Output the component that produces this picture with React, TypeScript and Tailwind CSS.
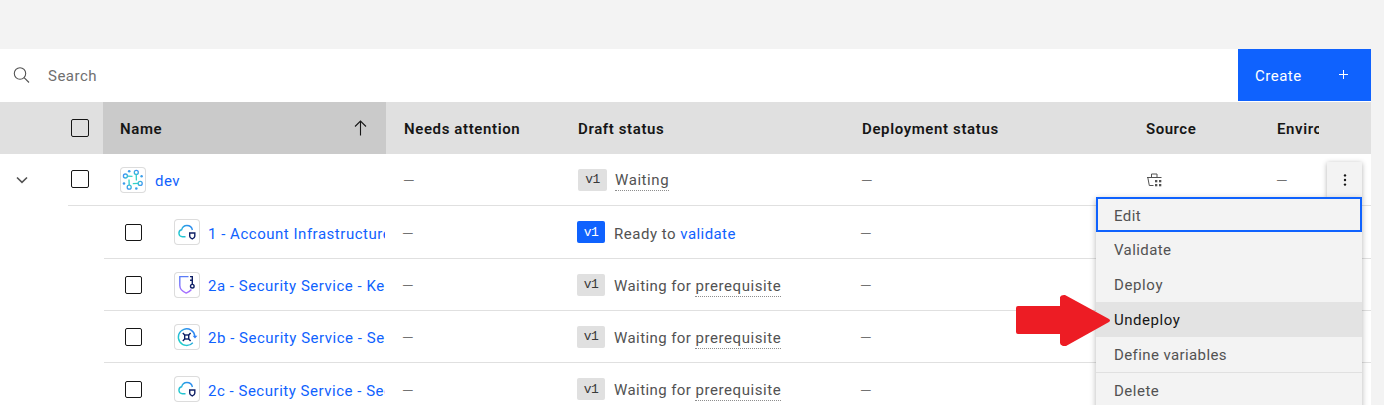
import type { ReactNode } from "react";

type IconKind = "arch" | "cloud" | "shield" | "rotate";

function Gradients() {
  return (
    <svg width="0" height="0" className="absolute" aria-hidden="true">
      <defs>
        <linearGradient id="aqua" gradientUnits="userSpaceOnUse" x1="4" y1="22" x2="22" y2="4">
          <stop offset="0.1" stopColor="#20d5c8" />
          <stop offset="0.9" stopColor="#2f7df6" />
        </linearGradient>
        <radialGradient id="aquaCore" gradientUnits="userSpaceOnUse" cx="13" cy="13" r="11">
          <stop offset="0.35" stopColor="#2fd6c4" />
          <stop offset="1" stopColor="#3f8ff5" />
        </radialGradient>
        <linearGradient id="violet" gradientUnits="userSpaceOnUse" x1="13" y1="4" x2="13" y2="22">
          <stop offset="0.1" stopColor="#5b7cf7" />
          <stop offset="0.9" stopColor="#a56eff" />
        </linearGradient>
      </defs>
    </svg>
  );
}

function Glyph({ kind }: { kind: IconKind }) {
  if (kind === "arch") {
    return (
      <g fill="none" stroke="url(#aquaCore)" strokeWidth="1.3">
        <circle cx="5.4" cy="9" r="2" />
        <circle cx="16.3" cy="5.4" r="2" />
        <circle cx="9.2" cy="20.2" r="2" />
        <circle cx="20.2" cy="16.4" r="2" />
        <path d="M7.5 9.1L12.5 9.3" />
        <path d="M16.2 7.5L16.4 13.5" />
        <path d="M9.2 18.1L9 12.5" />
        <path d="M18 16.4L12.8 16.6" />
        <g fill="url(#aquaCore)" stroke="none">
          <circle cx="9.2" cy="4.2" r="1.3" />
          <circle cx="21.6" cy="9.2" r="1.2" />
          <circle cx="4" cy="16.5" r="1.3" />
          <circle cx="16.3" cy="21.5" r="1.3" />
        </g>
      </g>
    );
  }
  if (kind === "cloud") {
    return (
      <g fill="none" strokeWidth="1.4">
        <path stroke="url(#aqua)" d="M11.5 17.8H8.4A3.6 3.6 0 0 1 7.7 10.7C8.3 8.2 10.4 6.5 12.9 6.5C15.8 6.5 17.9 8.5 18.4 11" />
        <path stroke="#0f1f66" d="M15.7 14H20.8V17.2C20.8 18.3 19.8 19.200 18.25 20C16.7 19.200 15.7 18.3 15.7 17.2Z" />
      </g>
    );
  }
  if (kind === "shield") {
    return (
      <g fill="none" strokeWidth="1.4">
        <path stroke="url(#violet)" d="M14.5 4.6H5.8V13.5C5.8 17.5 8.8 19.6 12.2 21.1C14.3 20.2 16.2 19.1 17.4 17.5" />
        <path stroke="#0f1f66" d="M18.3 12.3V4.6H16M18.3 8.2H16" />
        <circle stroke="#0f1f66" cx="18.3" cy="14.2" r="1.8" />
      </g>
    );
  }
  return (
    <g fill="none" strokeWidth="1.4">
      <path stroke="url(#aqua)" d="M20.9 12.300A8.300 8.300 0 1 0 18.800 18.700" />
      <path fill="#2f7df6" stroke="none" d="M18.600 11.800H23.400L21 14.600Z" />
      <rect stroke="#0f1f66" x="10.7" y="11" width="4" height="4" />
      <path stroke="#0f1f66" d="M8.800 9.100L10.7 11M16.6 9.1L14.7 11M8.800 16.900L10.7 15M16.6 16.9L14.7 15" />
    </g>
  );
}

function AppIcon({ kind }: { kind: IconKind }) {
  return (
    <span className="h-[26px] w-[26px] shrink-0 rounded-[4px] bg-white ring-1 ring-inset ring-[#dcdcdc]">
      <svg width="26" height="26" viewBox="0 0 26 26">
        <Glyph kind={kind} />
      </svg>
    </span>
  );
}

function Checkbox({ className = "h-[18px] w-[18px]" }: { className?: string }) {
  return <span className={"block shrink-0 rounded-[2px] border border-[#161616] " + className} />;
}

function Tag({ className = "w-[28px] bg-[#e0e0e0] text-[#393939]" }: { className?: string }) {
  return (
    <span
      className={
        "flex h-[22px] shrink-0 items-center justify-center rounded-[2px] pt-px font-['Liberation_Mono',monospace] text-[13px] tracking-[-0.5px] " +
        className
      }
    >
      v1
    </span>
  );
}

function Hint({ children }: { children: ReactNode }) {
  return (
    <span className="inline-block h-[21px] border-b border-dotted border-[#8d8d8d] leading-[20px] tracking-[0.58px]">
      {children}
    </span>
  );
}

function Dash() {
  return <span className="-ml-px inline-block pt-[3px] font-light">—</span>;
}

type ChildRow = { name: string; icon: IconKind; ready?: boolean; height: string; box: string };

// Titles run up to the edge of the name column.
const rows: ChildRow[] = [
  { name: "1 - Account Infrastructure", icon: "cloud", ready: true, height: "h-[53px]", box: "h-[17px] w-[17px]" },
  { name: "2a - Security Service - Ke", icon: "shield", height: "h-[52px]", box: "h-[18px] w-[17px] mt-px" },
  { name: "2b - Security Service - Se", icon: "rotate", height: "h-[52px]", box: "h-[18px] w-[17px] mt-px" },
  { name: "2c - Security Service - Sec", icon: "cloud", height: "h-[53px]", box: "h-[17px] w-[17px]" },
];

function Row({ row }: { row: ChildRow }) {
  return (
    <div className={"flex pl-[104px] " + row.height}>
      <div className="flex grow items-center border-b border-[#e0e0e0]">
        <div className="flex w-[281px] shrink-0 items-center overflow-hidden pl-[21px]">
          <Checkbox className={row.box} />
          <div className="ml-8 flex items-center">
            <AppIcon kind={row.icon} />
            <span className="ml-[8px] mt-[3px] whitespace-nowrap tracking-[0.52px] text-[#0f62fe]">{row.name}</span>
          </div>
        </div>
        <div className="w-[192px] shrink-0 pl-[18px]">
          <Dash />
        </div>
        <div className="flex w-[284px] shrink-0 items-center">
          <Tag className={row.ready ? "w-[28px] bg-[#0f62fe] text-white" : undefined} />
          <span className="ml-[9px] flex whitespace-pre pt-[3px] tracking-[0.42px]">
            {row.ready ? (
              <>
                <span className="tracking-[0.52px]">Ready to </span>
                <span className="text-[#0f62fe]">validate</span>
              </>
            ) : (
              <>
                Waiting for <Hint>prerequisite</Hint>
              </>
            )}
          </span>
        </div>
        <Dash />
      </div>
    </div>
  );
}

function MenuItem({ children, className = "" }: { children: ReactNode; className?: string }) {
  return <div className={"flex items-center pl-[18px] " + className}>{children}</div>;
}

function ActionMenu() {
  return (
    <div className="absolute left-[1096px] top-[197px] h-[240px] w-[266px] bg-[#f3f3f3] text-[#525252] shadow-[0_2px_6px_rgba(0,0,0,0.3)]">
      <MenuItem className="h-[35px] pt-[2px] tracking-[0.46px] ring-2 ring-inset ring-[#0f62fe]">Edit</MenuItem>
      <MenuItem className="h-[35px] tracking-[0.4px]">Validate</MenuItem>
      <MenuItem className="h-[35px] tracking-[0.62px]">Deploy</MenuItem>
      <MenuItem className="h-[35px] bg-[#e3e3e3] tracking-[0.53px] text-[#161616]">Undeploy</MenuItem>
      <MenuItem className="h-[35px] tracking-[0.4px]">Define variables</MenuItem>
      <MenuItem className="h-[36px] border-t border-[#e0e0e0]">Delete</MenuItem>
    </div>
  );
}

export default function App() {
  return (
    <div className="relative h-[405px] w-[1384px] overflow-hidden bg-[#f3f3f3] pt-[49px] font-['Roboto',sans-serif] text-[15px] leading-[20px] tracking-[0.5px] text-[#525252]">
      <Gradients />
      <div className="w-[1371px] bg-white">
        <div className="flex h-[53px] items-start">
          <div className="flex h-[52px] grow items-center pl-[13px]">
            <svg width="17" height="17" viewBox="0 0 17 17" fill="none" stroke="#525252" strokeWidth="1.1">
              <circle cx="7" cy="6.500" r="5.700" />
              <path d="M11.1 10.6L16 15.5" />
            </svg>
            <span className="ml-[18px] mt-[2px] text-[#6f6f6f]">Search</span>
          </div>
          <div className="flex h-[52px] w-[133px] items-center justify-between bg-[#0f62fe] pl-[17px] pr-[22px] text-white">
            <span className="mt-[2px] tracking-[0.5px]">Create</span>
            <svg width="11" height="11" viewBox="0 0 11 11" stroke="#fff" strokeWidth="1" className="-mt-px">
              <path d="M5.5 1V10M1 5.5H10" />
            </svg>
          </div>
        </div>

        <div className="flex h-[52px] items-stretch bg-[#e0e0e0] font-semibold tracking-[0.62px] text-[#161616]">
          <div className="flex w-[103px] items-center pl-[71px]">
            <Checkbox />
          </div>
          <div className="flex w-[283px] items-center justify-between bg-[#cacaca] pl-[17px] pr-[19px]">
            <span className="mt-[2px]">Name</span>
            <svg width="13" height="16" viewBox="0 0 13 16" fill="none" stroke="#161616" strokeWidth="1.1" className="-mt-px">
              <path d="M6.5 15.5V1M1 6.5L6.5 1L12 6.5" />
            </svg>
          </div>
          <div className="mt-[2px] flex w-[192px] items-center pl-[18px]">Needs attention</div>
          <div className="mt-[2px] flex w-[284px] items-center">Draft status</div>
          <div className="mt-[2px] flex w-[284px] items-center">Deployment status</div>
          <div className="mt-[2px] flex w-[131px] items-center tracking-[0.52px]">Source</div>
          <div className="mt-[2px] flex w-[42px] items-center overflow-hidden">Enviro</div>
        </div>

        <div className="flex h-[52px]">
          <div className="flex w-[68px] items-center pl-[16px]">
            <svg width="12" height="8" viewBox="0 0 12 8" fill="none" stroke="#525252" strokeWidth="1.6">
              <path d="M1 1.5L6 6.3L11 1.5" />
            </svg>
          </div>
          <div className="flex grow items-center border-b border-[#e0e0e0] pl-[3px]">
            <Checkbox className="mb-[2px] h-[18px] w-[18px]" />
            <div className="ml-[31px] flex w-[266px] items-center">
              <AppIcon kind="arch" />
              <span className="ml-[9px] mt-[3px] text-[#0f62fe]">dev</span>
            </div>
            <div className="w-[192px] pl-[18px]">
              <Dash />
            </div>
            <div className="flex w-[284px] items-center">
              <Tag className="w-[29px] bg-[#e0e0e0] text-[#393939]" />
              <span className="ml-[8px] mt-[2px]">
                <Hint>Waiting</Hint>
              </span>
            </div>
            <div className="w-[284px]">
              <Dash />
            </div>
            <div className="w-[131px]">
              <svg width="16" height="15" viewBox="0 0 16 15" fill="none" stroke="#525252" strokeWidth="1">
                <path d="M1 5.5H15.5M5.500 5.500V2H11V5.500M1.800 5.500L3.300 13.5H7.500" />
                <g fill="#525252" stroke="none">
                  <rect x="9" y="8" width="2.300" height="2.300" />
                  <rect x="13" y="8" width="2.300" height="2.300" />
                  <rect x="9" y="12" width="2.300" height="2.300" />
                  <rect x="13" y="12" width="2.300" height="2.300" />
                </g>
              </svg>
            </div>
            <Dash />
          </div>
        </div>

        {rows.map((row) => (
          <Row key={row.name} row={row} />
        ))}
      </div>

      <div className="absolute left-[1327px] top-[162px] flex h-[36px] w-[35px] items-center justify-center bg-[#f3f3f3] shadow-[0_1px_5px_rgba(0,0,0,0.3)]">
        <svg width="4" height="14" viewBox="0 0 4 14" fill="#161616">
          <circle cx="2" cy="2.4" r="1.2" />
          <circle cx="2" cy="7" r="1.2" />
          <circle cx="2" cy="11.6" r="1.2" />
        </svg>
      </div>
      <ActionMenu />
      <svg className="absolute left-[1016px] top-[295px]" width="95" height="52" viewBox="0 0 95 52">
        <path
          fill="#ed1c24"
          d="M2 11H44V2Q45 0 48 0H49L93 24Q95 25.5 93 27L50 51H47Q44 50 44 48V39H2Q0 39 0 37V13Q0 11 2 11Z"
        />
      </svg>
    </div>
  );
}
